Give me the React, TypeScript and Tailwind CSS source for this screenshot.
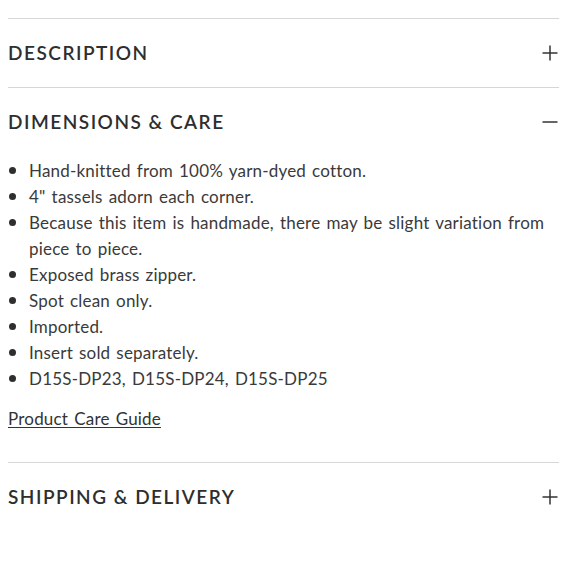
import { useState } from "react";

const careItems = [
  "Hand-knitted from 100% yarn-dyed cotton.",
  '4" tassels adorn each corner.',
  "Because this item is handmade, there may be slight variation from piece to piece.",
  "Exposed brass zipper.",
  "Spot clean only.",
  "Imported.",
  "Insert sold separately.",
  "D15S-DP23, D15S-DP24, D15S-DP25",
];

function ToggleIcon({ open }: { open: boolean }) {
  return (
    <svg width="16" height="16" viewBox="0 0 16 16" className="text-[#333]">
      <path d="M0.5 8H15.5" stroke="currentColor" strokeWidth="1.5" />
      {!open && <path d="M8 0.5V15.5" stroke="currentColor" strokeWidth="1.5" />}
    </svg>
  );
}

function Section({
  title,
  open,
  onToggle,
  children,
}: {
  title: string;
  open: boolean;
  onToggle: () => void;
  children?: React.ReactNode;
}) {
  return (
    <div className="border-t border-[#d6d6d6]">
      <button
        onClick={onToggle}
        className="flex h-[68px] w-full items-center justify-between pr-px text-left"
      >
        <span className="text-[19px] font-semibold tracking-[1.5px] text-[#2e2e2e]">{title}</span>
        <ToggleIcon open={open} />
      </button>
      {open && children}
    </div>
  );
}

export default function App() {
  const [open, setOpen] = useState<Record<string, boolean>>({ care: true });
  const toggle = (k: string) => setOpen((o) => ({ ...o, [k]: !o[k] }));

  return (
    <div className="min-h-screen bg-white font-['Lato',sans-serif] text-[#3a3a3a]">
      <div className="ml-2 w-[551px] pt-[18px]">
        <Section title="DESCRIPTION" open={!!open.desc} onToggle={() => toggle("desc")}>
          <p className="pb-8 text-[17px] leading-[26px]">Description</p>
        </Section>

        <Section title="DIMENSIONS & CARE" open={!!open.care} onToggle={() => toggle("care")}>
          <div className="pb-[30px] pt-[2px] text-[17px] leading-[26px] tracking-[0.2px] [word-spacing:1.5px]">
            <ul>
              {careItems.map((item) => (
                <li key={item} className="flex">
                  <span className="flex w-[21px] shrink-0 pt-[9px] pl-[1px]">
                    <span className="h-[7px] w-[7px] rounded-full bg-[#2e2e2e]" />
                  </span>
                  <span>{item}</span>
                </li>
              ))}
            </ul>
            <a
              href="#"
              className="mt-[14px] inline-block text-[#333] underline underline-offset-2"
            >
              Product Care Guide
            </a>
          </div>
        </Section>

        <Section title="SHIPPING & DELIVERY" open={!!open.ship} onToggle={() => toggle("ship")}>
          <p className="pb-8 text-[17px] leading-[26px]">Shipping</p>
        </Section>
      </div>
    </div>
  );
}
